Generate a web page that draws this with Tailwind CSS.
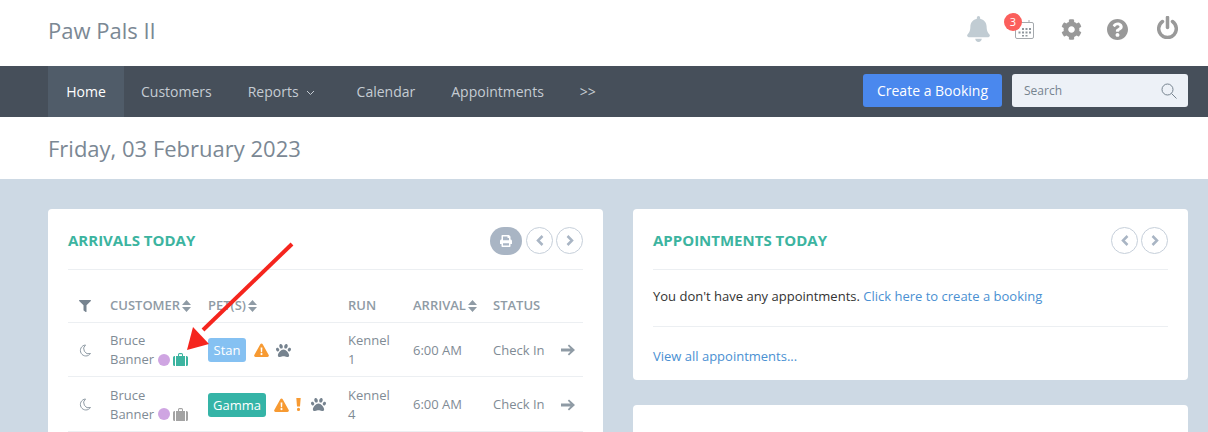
<!DOCTYPE html>
<html lang="en">
<head>
    <meta charset="UTF-8">
    <title>Paw Pals II</title>
    <script src="https://cdn.jsdelivr.net/npm/@tailwindcss/browser@4"></script>
</head>
<body class="bg-[#cdd9e4] font-['Open_Sans',sans-serif] text-[13px] text-[#7f8b95]">
<div class="relative h-[432px] overflow-hidden">

    <!-- Top header -->
    <header class="h-[66px] bg-white flex items-center justify-between pl-12 pr-[30px] pb-2">
        <div class="text-[22px] text-[#7b8894] mt-[2px]">Paw Pals II</div>
        <div class="flex items-center">
            <svg class="w-[23px] h-[26px] fill-[#c1ccd3]" viewBox="0 0 448 512"><path d="M224 512c35.32 0 63.97-28.65 63.97-64H160.03c0 35.35 28.65 64 63.97 64zm215.39-149.71c-19.32-20.76-55.47-51.99-55.47-154.29 0-77.7-54.48-139.9-127.94-155.16V32c0-17.67-14.32-32-31.98-32s-31.98 14.33-31.98 32v20.84C118.56 68.1 64.08 130.3 64.08 208c0 102.3-36.15 133.53-55.47 154.29-6 6.45-8.66 14.16-8.61 21.71.11 16.4 12.98 32 32.1 32h383.8c19.12 0 32-15.6 32.1-32 .05-7.55-2.61-15.27-8.61-21.71z"/></svg>
            <div class="relative ml-[25px] mt-[1px]">
                <svg class="w-[19px] h-[19px] fill-none stroke-[#a5a9ad]" viewBox="0 0 19 19"><rect x="0.5" y="2.5" width="18" height="16" rx="1.5"/><path d="M14 0v3"/><g class="fill-[#8f979d] stroke-none"><rect x="7" y="8" width="2" height="2"/><rect x="10.5" y="8" width="2" height="2"/><rect x="14" y="8" width="2" height="2"/><rect x="3.5" y="11.5" width="2" height="2"/><rect x="7" y="11.5" width="2" height="2"/><rect x="10.5" y="11.5" width="2" height="2"/><rect x="14" y="11.5" width="2" height="2"/><rect x="7" y="15" width="2" height="1.5"/><rect x="10.5" y="15" width="2" height="1.5"/></g></svg>
                <span class="absolute -left-[11px] -top-[7px] w-[18px] h-[18px] rounded-full bg-[#fb5f5c] text-white text-[11px] leading-[18px] text-center">3</span>
            </div>
            <svg class="ml-[27px] w-[21px] h-[21px] fill-[#999999]" viewBox="0 0 512 512"><path d="M487.4 315.7l-42.6-24.6c4.3-23.2 4.3-47 0-70.2l42.6-24.6c4.9-2.8 7.1-8.6 5.5-14-11.1-35.6-30-67.8-54.7-94.6-3.8-4.1-10-5.1-14.8-2.3L380.8 110c-17.9-15.4-38.5-27.3-60.8-35.1V25.8c0-5.6-3.9-10.5-9.4-11.7-36.7-8.2-74.3-7.8-109.2 0-5.5 1.2-9.4 6.1-9.4 11.7V75c-22.2 7.9-42.8 19.8-60.8 35.1L88.7 85.5c-4.9-2.8-11-1.9-14.8 2.3-24.7 26.7-43.6 58.9-54.7 94.6-1.7 5.4.6 11.2 5.5 14L67.3 221c-4.3 23.2-4.3 47 0 70.2l-42.6 24.6c-4.9 2.8-7.1 8.6-5.5 14 11.1 35.6 30 67.8 54.7 94.6 3.8 4.1 10 5.1 14.8 2.3l42.6-24.6c17.9 15.4 38.5 27.3 60.8 35.1v49.2c0 5.6 3.9 10.5 9.4 11.7 36.7 8.2 74.3 7.8 109.2 0 5.5-1.2 9.4-6.1 9.4-11.7v-49.2c22.2-7.9 42.8-19.8 60.8-35.1l42.6 24.6c4.9 2.8 11 1.9 14.8-2.3 24.7-26.7 43.6-58.9 54.7-94.6 1.5-5.5-.7-11.3-5.6-14.1zM256 336c-44.1 0-80-35.9-80-80s35.9-80 80-80 80 35.9 80 80-35.9 80-80 80z"/></svg>
            <svg class="ml-[25px] w-[21px] h-[21px] fill-[#999999]" viewBox="8 8 496 496"><path d="M504 256c0 136.997-111.043 248-248 248S8 392.997 8 256C8 119.083 119.043 8 256 8s248 111.083 248 248zM262.655 90c-54.497 0-89.255 22.957-116.549 63.758-3.536 5.286-2.353 12.415 2.715 16.258l34.699 26.31c5.205 3.947 12.621 3.008 16.665-2.122 17.864-22.658 30.113-35.797 57.303-35.797 20.429 0 45.698 13.148 45.698 32.958 0 14.976-12.363 22.667-32.534 33.976C247.128 238.528 216 254.941 216 296v4c0 6.627 5.373 12 12 12h56c6.627 0 12-5.373 12-12v-1.333c0-28.462 83.186-29.647 83.186-106.667 0-58.002-60.165-102-116.531-102zM256 338c-25.365 0-46 20.635-46 46 0 25.364 20.635 46 46 46s46-20.636 46-46c0-25.365-20.635-46-46-46z"/></svg>
            <svg class="ml-[29px] -mt-[3px] w-[21px] h-[23px] fill-none stroke-[#999999] stroke-[3.5px]" viewBox="0 0 21 23" stroke-linecap="round"><path d="M10.5 1.5v10"/><path d="M5.5 5.5a8.8 8.8 0 1 0 10 0"/></svg>
        </div>
    </header>

    <!-- Nav bar -->
    <nav class="h-[51px] bg-[#464f5a] flex items-center pl-12 pr-5 text-[14px] text-[#c5ccd3]">
        <a class="h-full w-[76px] bg-[#505c69] text-white flex items-center justify-center">Home</a>
        <a class="ml-[17px]">Customers</a>
        <a class="ml-9 flex items-center">Reports
            <svg class="ml-[7px] mt-[2px] w-[9px] h-[6px] fill-none stroke-[#c5ccd3]" viewBox="0 0 9 6"><path d="M1 1l3.5 3.5L8 1"/></svg>
        </a>
        <a class="ml-[42px]">Calendar</a>
        <a class="ml-9">Appointments</a>
        <a class="ml-9">&gt;&gt;</a>
        <button class="ml-auto -mt-[2px] w-[139px] h-[33px] rounded-[3px] bg-[#4a88ee] text-white text-[14px] font-medium">Create a Booking</button>
        <div class="ml-[10px] -mt-[2px] w-[176px] h-[33px] rounded-[3px] bg-[#edf1f7] flex items-center justify-between pl-3 pr-[11px] text-[12px] text-[#76838f]">
            <span>Search</span>
            <svg class="w-[16px] h-[16px] fill-none stroke-[#76838f]" viewBox="0 0 16 16"><circle cx="6.5" cy="6.5" r="5.5"/><path d="M10.5 10.5l5 5"/></svg>
        </div>
    </nav>

    <!-- Date bar -->
    <div class="h-[62px] bg-white flex items-center pl-12 text-[22px] text-[#7b8894]">Friday, 03 February 2023</div>

    <!-- Cards -->
    <main class="grid grid-cols-2 gap-x-[30px] pl-12 pr-5 pt-[30px]">

        <!-- Arrivals -->
        <section class="bg-white rounded-[4px] px-5 h-[300px]">
            <div class="h-[61px] pt-[3px] border-b border-[#eceff2] flex items-center justify-between">
                <h2 class="text-[15px] font-bold uppercase text-[#3cb4a0]">Arrivals Today</h2>
                <div class="flex items-center gap-[3px]">
                    <span class="w-8 h-7 rounded-full bg-[#a9b5c4] flex items-center justify-center mr-[1px]">
                        <svg class="w-3 h-3 fill-white" viewBox="0 0 512 512"><path d="M448 192V77.25c0-8.49-3.37-16.62-9.37-22.63L393.37 9.37c-6-6-14.14-9.37-22.63-9.37H96C78.33 0 64 14.33 64 32v160c-35.35 0-64 28.65-64 64v112c0 8.84 7.16 16 16 16h48v96c0 17.67 14.33 32 32 32h320c17.67 0 32-14.33 32-32v-96h48c8.84 0 16-7.16 16-16V256c0-35.35-28.65-64-64-64zm-64 256H128v-96h256v96zm0-224H128V64h192v48c0 8.84 7.16 16 16 16h48v96z"/></svg>
                    </span>
                    <span class="w-[27px] h-[27px] rounded-full border border-[#c6cfda] flex items-center justify-center">
                        <svg class="w-[8px] h-[11px] fill-none stroke-[#a9b5c4] stroke-[2.5px]" viewBox="0 0 8 11"><path d="M6.5 1L2 5.5 6.5 10"/></svg>
                    </span>
                    <span class="w-[27px] h-[27px] rounded-full border border-[#c6cfda] flex items-center justify-center">
                        <svg class="w-[8px] h-[11px] fill-none stroke-[#a9b5c4] stroke-[2.5px]" viewBox="0 0 8 11"><path d="M1.5 1L6 5.5 1.5 10"/></svg>
                    </span>
                </div>
            </div>
            <table class="w-[515px] table-fixed">
                <colgroup><col class="w-[42px]"><col class="w-[98px]"><col class="w-[140px]"><col class="w-[65px]"><col class="w-[80px]"><col class="w-[68px]"><col class="w-[22px]"></colgroup>
                <thead>
                    <tr class="h-[52px] text-left text-[13px] font-semibold text-[#8f9ba5]">
                        <th class="pt-[20px] pl-[11px] font-semibold"><svg class="w-3 h-3 fill-[#76838f]" viewBox="0 0 512 512"><path d="M487.976 0H24.028C2.71 0-8.047 25.866 7.058 40.971L192 225.941V432c0 7.831 3.821 15.17 10.237 19.662l80 55.98C298.02 518.69 320 507.493 320 487.98V225.941l184.947-184.97C520.021 25.896 509.338 0 487.976 0z"/></svg></th>
                        <th class="pt-[20px] font-semibold"><span class="flex items-center gap-[2px]">CUSTOMER<svg class="w-[9px] h-[12px] fill-[#8f9ba5]" viewBox="0 0 9 12"><path d="M4.5 0L9 5H0zM4.5 12L0 7h9z"/></svg></span></th>
                        <th class="pt-[20px] font-semibold"><span class="flex items-center gap-[2px]">PET(S)<svg class="w-[9px] h-[12px] fill-[#8f9ba5]" viewBox="0 0 9 12"><path d="M4.5 0L9 5H0zM4.5 12L0 7h9z"/></svg></span></th>
                        <th class="pt-[20px] font-semibold">RUN</th>
                        <th class="pt-[20px] font-semibold"><span class="flex items-center gap-[2px]">ARRIVAL<svg class="w-[9px] h-[12px] fill-[#8f9ba5]" viewBox="0 0 9 12"><path d="M4.5 0L9 5H0zM4.5 12L0 7h9z"/></svg></span></th>
                        <th class="pt-[20px] font-semibold" colspan="2">STATUS</th>
                    </tr>
                </thead>
                <tbody class="leading-[19px] [&_td]:pt-[2px]">
                    <tr class="h-[54px] border-t border-[#eceff2]">
                        <td class="pl-[11px]"><svg class="w-[12px] h-[13px] fill-none stroke-[#8f9ba5]" viewBox="0 0 12 13"><path d="M6.5 1A5.5 5.5 0 1 0 11.5 9.5 5 5 0 0 1 6.5 1z"/></svg></td>
                        <td>Bruce<br><span class="inline-flex items-center">Banner
                            <span class="ml-1 w-3 h-3 rounded-full bg-[#cfa5e2]"></span>
                            <svg class="ml-[3px] w-[15px] h-[13px] fill-[#3cb4a0]" viewBox="0 0 15 13"><path d="M5 3V1.5A1.5 1.5 0 0 1 6.5 0h2A1.5 1.5 0 0 1 10 1.5V3H9V1.2H6V3zM0 4.5A1.5 1.5 0 0 1 1.5 3H2v10h-.5A1.5 1.5 0 0 1 0 11.5zM3 3h9v10H3zM13 3h.5A1.5 1.5 0 0 1 15 4.5v7a1.5 1.5 0 0 1-1.5 1.5H13z"/></svg>
                        </span></td>
                        <td><span class="flex items-center">
                            <span class="h-6 w-[38px] rounded-[3px] bg-[#85c1f2] text-white text-center leading-6">Stan</span>
                            <svg class="ml-[8px] w-[15px] h-[14px] fill-[#f79a32]" viewBox="0 0 15 14"><path fill-rule="evenodd" d="M7.5 0.5c.5 0 .9.3 1.2.8l6 10.6c.5 1-.2 2.1-1.2 2.1H1.5c-1 0-1.7-1.1-1.2-2.1l6-10.6c.3-.5.7-.8 1.2-.8zM6.6 4.5l.3 4.8h1.2l.3-4.8zM7.5 10a1.1 1.1 0 1 0 0 2.2 1.1 1.1 0 0 0 0-2.2z"/></svg>
                            <svg class="ml-[7px] w-[15px] h-[15px] fill-[#76838f]" viewBox="0 0 512 512"><path d="M256 224c-79.41 0-192 122.76-192 200.25 0 34.9 26.81 55.75 71.74 55.75 48.84 0 81.09-25.08 120.26-25.08 39.51 0 71.85 25.08 120.26 25.08 44.93 0 71.74-20.85 71.74-55.75C448 346.76 335.41 224 256 224zm-147.28-12.61c-10.4-34.65-42.44-57.09-71.56-50.13-29.12 6.96-44.29 40.69-33.89 75.34 10.4 34.65 42.44 57.09 71.56 50.13 29.12-6.96 44.29-40.69 33.89-75.34zm84.72-20.78c30.94-8.14 46.42-49.94 34.58-93.36s-46.52-72.01-77.46-63.87-46.42 49.94-34.58 93.36c11.84 43.42 46.52 72.02 77.46 63.87zm281.39-29.34c-29.12-6.96-61.15 15.48-71.56 50.13-10.4 34.65 4.77 68.38 33.89 75.34 29.12 6.96 61.15-15.48 71.56-50.13 10.4-34.65-4.77-68.38-33.89-75.34zm-156.27 29.34c30.94 8.14 65.62-20.45 77.46-63.87 11.84-43.42-3.64-85.21-34.58-93.36s-65.62 20.45-77.46 63.87c-11.84 43.42 3.64 85.22 34.58 93.36z"/></svg>
                        </span></td>
                        <td>Kennel<br>1</td>
                        <td>6:00 AM</td>
                        <td>Check In</td>
                        <td><svg class="w-[14px] h-[12px] fill-[#8f9ba5]" viewBox="0 0 14 12"><path d="M8 0.5L14 6 8 11.5 6.8 10.3 9.5 7.5H0v-3h9.5L6.8 1.7z"/></svg></td>
                    </tr>
                    <tr class="h-[55px] border-y border-[#eceff2]">
                        <td class="pl-[11px]"><svg class="w-[12px] h-[13px] fill-none stroke-[#8f9ba5]" viewBox="0 0 12 13"><path d="M6.5 1A5.5 5.5 0 1 0 11.5 9.5 5 5 0 0 1 6.5 1z"/></svg></td>
                        <td>Bruce<br><span class="inline-flex items-center">Banner
                            <span class="ml-1 w-3 h-3 rounded-full bg-[#cfa5e2]"></span>
                            <svg class="ml-[3px] w-[15px] h-[13px] fill-[#a3a3a3]" viewBox="0 0 15 13"><path d="M5 3V1.5A1.5 1.5 0 0 1 6.5 0h2A1.5 1.5 0 0 1 10 1.5V3H9V1.2H6V3zM0 4.5A1.5 1.5 0 0 1 1.5 3H2v10h-.5A1.5 1.5 0 0 1 0 11.5zM3 3h9v10H3zM13 3h.5A1.5 1.5 0 0 1 15 4.5v7a1.5 1.5 0 0 1-1.5 1.5H13z"/></svg>
                        </span></td>
                        <td><span class="flex items-center">
                            <span class="h-6 w-[58px] rounded-[3px] bg-[#35b4a7] text-white text-center leading-6">Gamma</span>
                            <svg class="ml-[8px] w-[15px] h-[14px] fill-[#f79a32]" viewBox="0 0 15 14"><path fill-rule="evenodd" d="M7.5 0.5c.5 0 .9.3 1.2.8l6 10.6c.5 1-.2 2.1-1.2 2.1H1.5c-1 0-1.7-1.1-1.2-2.1l6-10.6c.3-.5.7-.8 1.2-.8zM6.6 4.5l.3 4.8h1.2l.3-4.8zM7.5 10a1.1 1.1 0 1 0 0 2.2 1.1 1.1 0 0 0 0-2.2z"/></svg>
                            <svg class="ml-[7px] w-[5px] h-[13px] fill-[#f79a32]" viewBox="0 0 5 13"><path d="M0.3 0h4.4L4 8.5H1zM2.5 9.8a1.6 1.6 0 1 1 0 3.2 1.6 1.6 0 0 1 0-3.2z"/></svg>
                            <svg class="ml-[10px] w-[15px] h-[15px] fill-[#76838f]" viewBox="0 0 512 512"><path d="M256 224c-79.41 0-192 122.76-192 200.25 0 34.9 26.81 55.75 71.74 55.75 48.84 0 81.09-25.08 120.26-25.08 39.51 0 71.85 25.08 120.26 25.08 44.93 0 71.74-20.85 71.74-55.75C448 346.76 335.41 224 256 224zm-147.28-12.61c-10.4-34.65-42.44-57.09-71.56-50.13-29.12 6.96-44.29 40.69-33.89 75.34 10.4 34.65 42.44 57.09 71.56 50.13 29.12-6.96 44.29-40.69 33.89-75.34zm84.72-20.78c30.94-8.14 46.42-49.94 34.58-93.36s-46.52-72.01-77.46-63.87-46.42 49.94-34.58 93.36c11.84 43.42 46.52 72.02 77.46 63.87zm281.39-29.34c-29.12-6.96-61.15 15.48-71.56 50.13-10.4 34.65 4.77 68.38 33.89 75.34 29.12 6.96 61.15-15.48 71.56-50.13 10.4-34.65-4.77-68.38-33.89-75.34zm-156.27 29.34c30.94 8.14 65.62-20.45 77.46-63.87 11.84-43.42-3.64-85.21-34.58-93.36s-65.62 20.45-77.46 63.87c-11.84 43.42 3.64 85.22 34.58 93.36z"/></svg>
                        </span></td>
                        <td>Kennel<br>4</td>
                        <td>6:00 AM</td>
                        <td>Check In</td>
                        <td><svg class="w-[14px] h-[12px] fill-[#8f9ba5]" viewBox="0 0 14 12"><path d="M8 0.5L14 6 8 11.5 6.8 10.3 9.5 7.5H0v-3h9.5L6.8 1.7z"/></svg></td>
                    </tr>
                </tbody>
            </table>
        </section>

        <!-- Right column -->
        <div class="flex flex-col gap-[25px]">
            <section class="bg-white rounded-[4px] px-5 h-[171px]">
                <div class="h-[61px] pt-[3px] border-b border-[#eceff2] flex items-center justify-between">
                    <h2 class="text-[15px] font-bold uppercase text-[#3cb4a0]">Appointments Today</h2>
                    <div class="flex items-center gap-[3px]">
                        <span class="w-[27px] h-[27px] rounded-full border border-[#c6cfda] flex items-center justify-center">
                            <svg class="w-[8px] h-[11px] fill-none stroke-[#a9b5c4] stroke-[2.5px]" viewBox="0 0 8 11"><path d="M6.5 1L2 5.5 6.5 10"/></svg>
                        </span>
                        <span class="w-[27px] h-[27px] rounded-full border border-[#c6cfda] flex items-center justify-center">
                            <svg class="w-[8px] h-[11px] fill-none stroke-[#a9b5c4] stroke-[2.5px]" viewBox="0 0 8 11"><path d="M1.5 1L6 5.5 1.5 10"/></svg>
                        </span>
                    </div>
                </div>
                <div class="h-[57px] pb-[2px] border-b border-[#eceff2] flex items-center text-[#333333]">
                    <p>You don't have any appointments. <a class="text-[#4a90d2]">Click here to create a booking</a></p>
                </div>
                <a class="block mt-[20px] text-[#4a90d2]">View all appointments...</a>
            </section>
            <section class="bg-white rounded-[4px] h-[60px]"></section>
        </div>
    </main>

    <!-- Red annotation arrow -->
    <svg class="absolute left-0 top-0 w-[1208px] h-[432px] pointer-events-none" viewBox="0 0 1208 432">
        <path d="M292 244L203 330" class="stroke-[#f5251e] stroke-[4px]" fill="none"/>
        <polygon points="187,350 193,327 209,344" class="fill-[#f5251e]"/>
    </svg>
</div>
</body>
</html>
